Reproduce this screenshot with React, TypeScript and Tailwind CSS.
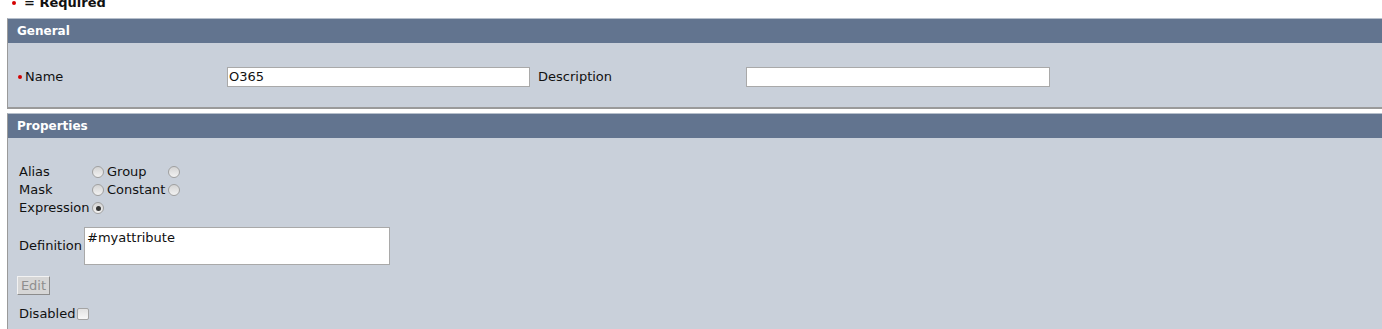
import React from "react";

function Radio({ checked = false }: { checked?: boolean }) {
  return (
    <span className="flex h-[12px] w-[12px] items-center justify-center rounded-full border border-[#a0a0a0] bg-gradient-to-b from-[#d4d4d4] to-[#f2f2f2]">
      {checked && <span className="h-[5px] w-[5px] rounded-full bg-[#333]" />}
    </span>
  );
}

function RedDot() {
  return <span className="inline-block h-[4px] w-[4px] rounded-full bg-[#d40000]" />;
}

export default function App() {
  return (
    <div className="h-[329px] w-[1382px] overflow-hidden bg-white font-['DejaVu_Sans',sans-serif] text-[13px] leading-[16px] text-[#111]">
      <div className="flex h-[18px] flex-col overflow-hidden">
        <div className="-mt-[5px] flex items-center pl-[12px] font-bold">
          <RedDot />
          <span className="ml-[8px]">= Required</span>
        </div>
      </div>

      <section className="ml-[7px] w-[1400px] border-l border-t border-b-2 border-l-[#9a9a9a] border-t-[#b6bfcb] border-b-[#9a9a9a]">
        <div className="flex h-[24px] items-center bg-[#62748f] pl-[9px] text-[12px] font-bold text-white">
          General
        </div>
        <div className="flex h-[64px] items-center bg-[#c9d0da] pl-[10px] pt-[3px]">
          <div className="flex w-[209px] items-center">
            <RedDot />
            <span className="ml-[3px]">Name</span>
          </div>
          <input
            readOnly
            value="O365"
            className="h-[20px] w-[303px] border border-[#a9a9a9] bg-white px-[1px] text-[13px] text-[#111] outline-none"
          />
          <div className="ml-[8px] w-[208px]">Description</div>
          <input
            readOnly
            value=""
            className="h-[20px] w-[304px] border border-[#a9a9a9] bg-white px-[1px] text-[13px] outline-none"
          />
        </div>
      </section>

      <section className="ml-[7px] mt-[4px] w-[1400px] border-l border-t border-l-[#9a9a9a] border-t-[#b6bfcb]">
        <div className="flex h-[24px] items-center bg-[#62748f] pl-[9px] text-[12px] font-bold text-white">
          Properties
        </div>
        <div className="flex h-[200px] flex-col items-start bg-[#c9d0da] pl-[11px] pt-[25px]">
          <div className="grid grid-cols-[73px_15px_61px_15px] auto-rows-[18px] items-center">
            <span>Alias</span>
            <Radio />
            <span>Group</span>
            <Radio />
            <span>Mask</span>
            <Radio />
            <span>Constant</span>
            <Radio />
            <span>Expression</span>
            <Radio checked />
          </div>

          <div className="mt-[10px] flex items-center">
            <span className="w-[65px]">Definition</span>
            <textarea
              readOnly
              value="#myattribute"
              className="h-[38px] w-[306px] resize-none border border-[#a9a9a9] bg-white px-[2px] py-[2px] text-[13px] leading-[16px] text-[#111] outline-none"
            />
          </div>

          <div className="-ml-[2px] mt-[11px]">
            <button
              disabled
              className="flex h-[19px] w-[33px] items-center justify-center border border-b-[#8c8c8c] border-l-[#f2f2f2] border-r-[#8c8c8c] border-t-[#f2f2f2] bg-[#d6d6d6] text-[13px] text-[#8e8e8e]"
            >
              Edit
            </button>
          </div>

          <div className="mt-[10px] flex h-[18px] items-center">
            <span>Disabled</span>
            <span className="ml-[2px] h-[12px] w-[12px] rounded-[2px] border border-[#a4a4a4] bg-gradient-to-b from-[#e2e2e2] to-[#f8f8f8]" />
          </div>
        </div>
      </section>
    </div>
  );
}
